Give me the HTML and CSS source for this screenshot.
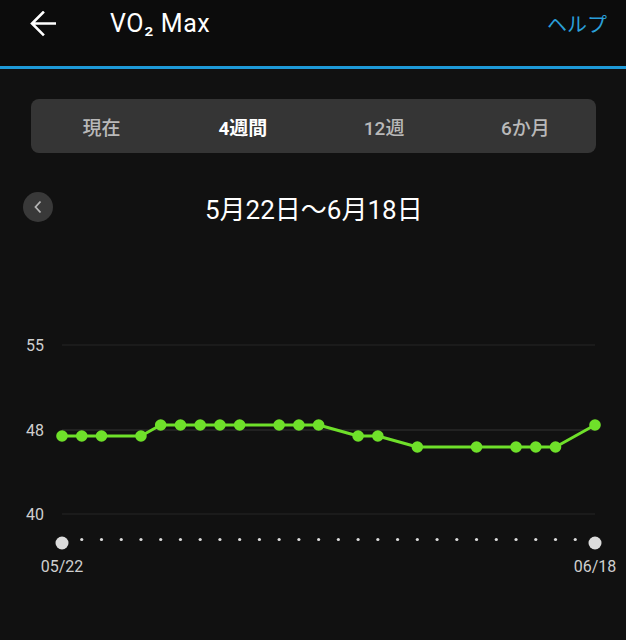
FILE: index.html
```html
<!DOCTYPE html>
<html lang="ja">
<head>
    <meta charset="UTF-8">
    <meta name="viewport" content="width=device-width, initial-scale=1.0">
    <title>VO2 Max</title>
    <link rel="stylesheet" href="styles.css">
</head>
<body>
    <header class="appbar">
        <div class="appbar-row">
            <button class="back-btn" aria-label="戻る">
                <svg width="26" height="26" viewBox="0 0 26 26">
                    <path d="M25 12.5H3 M13 1.5 L2 12.5 L13 23.5" fill="none" stroke="#fff" stroke-width="2.6" stroke-linecap="square"/>
                </svg>
            </button>
            <h1 class="title">VO₂ Max</h1>
            <a class="help" href="#">ヘルプ</a>
        </div>
    </header>

    <main class="content">
        <nav class="tabs">
            <span class="tab">現在</span>
            <span class="tab active">4週間</span>
            <span class="tab">12週</span>
            <span class="tab">6か月</span>
        </nav>

        <div class="range">
            <button class="prev-btn" aria-label="前へ">
                <svg width="10" height="14" viewBox="0 0 10 14">
                    <path d="M7.5 1.5 L2.5 7 L7.5 12.5" fill="none" stroke="#b5b5b5" stroke-width="1.8"/>
                </svg>
            </button>
            <span class="range-text">5月22日〜6月18日</span>
        </div>
    </main>

    <svg class="chart" viewBox="0 223 626 417" width="626" height="417" id="chart">
        <!-- grid -->
        <line x1="62" x2="595" y1="346" y2="346" class="grid"/>
        <line x1="62" x2="595" y1="431" y2="431" class="grid mid"/>
        <line x1="62" x2="595" y1="515" y2="515" class="grid"/>
        <text x="26" y="351.5" class="axis">55</text>
        <text x="26" y="436.5" class="axis">48</text>
        <text x="26" y="521" class="axis">40</text>
        <g id="days"></g>
        <g id="series"></g>
        <text x="62" y="573" class="axis" text-anchor="middle">05/22</text>
        <text x="595" y="573" class="axis" text-anchor="middle">06/18</text>
    </svg>

    <script>
        // day index -> y pixel
        const points = [
            [0, 437], [1, 437], [2, 437], [4, 437],
            [5, 426], [6, 426], [7, 426], [8, 426], [9, 426],
            [11, 426], [12, 426], [13, 426],
            [15, 437], [16, 437],
            [18, 448], [21, 448], [23, 448], [24, 448], [25, 448],
            [27, 426]
        ];
        const NS = 'http://www.w3.org/2000/svg';
        const step = (595 - 62) / 27;
        const dayX = i => 62 + i * step;

        const days = document.getElementById('days');
        for (let i = 0; i <= 27; i++) {
            const c = document.createElementNS(NS, 'circle');
            const edge = i === 0 || i === 27;
            c.setAttribute('cx', dayX(i));
            c.setAttribute('cy', edge ? 544 : 540.5);
            c.setAttribute('r', edge ? 6.5 : 1.6);
            c.setAttribute('class', 'tick');
            days.appendChild(c);
        }

        const series = document.getElementById('series');
        const line = document.createElementNS(NS, 'polyline');
        line.setAttribute('points', points.map(p => dayX(p[0]) + ',' + p[1]).join(' '));
        line.setAttribute('class', 'trend');
        series.appendChild(line);
        points.forEach(p => {
            const c = document.createElementNS(NS, 'circle');
            c.setAttribute('cx', dayX(p[0]));
            c.setAttribute('cy', p[1]);
            c.setAttribute('r', 5.8);
            c.setAttribute('class', 'dot');
            series.appendChild(c);
        });
    </script>
</body>
</html>
```

FILE: styles.css
```css
/* Base */
body {
    margin: 0;
    background: #111111;
    color: #fff;
    font-family: Roboto, "Noto Sans CJK JP", sans-serif;
    width: 626px;
    height: 640px;
    overflow: hidden;
}

button {
    background: none;
    border: none;
    padding: 0;
    cursor: pointer;
}

/* App bar */
.appbar {
    height: 66px;
    background: #0c0c0c;
    border-bottom: 3px solid #1e9ad8;
}

.appbar-row {
    height: 47px;
    display: flex;
    align-items: center;
    padding: 0 19px 0 30px;
}

.back-btn {
    display: flex;
    width: 26px;
    height: 26px;
}

.title {
    margin: 0 0 0 54px;
    font-size: 25px;
    font-weight: 400;
    letter-spacing: 0.6px;
    flex: 1;
}

.help {
    color: #2a9fd9;
    text-decoration: none;
    font-size: 20px;
}

/* Period tabs */
.content {
    padding: 30px 30px 0 31px;
}

.tabs {
    display: grid;
    grid-template-columns: repeat(4, 1fr);
    height: 54px;
    align-items: center;
    background: #353535;
    border-radius: 8px;
}

.tab {
    text-align: center;
    font-size: 19px;
    font-weight: 500;
    color: #b9b9b9;
}

.tab.active {
    color: #fff;
    font-weight: 700;
}

/* Date range */
.range {
    display: flex;
    align-items: center;
    height: 30px;
    margin: 39px 0 0 -8px;
}

.prev-btn {
    width: 30px;
    height: 30px;
    border-radius: 50%;
    background: #393939;
    display: flex;
    align-items: center;
    justify-content: center;
}

.range-text {
    font-size: 26px;
    margin-left: 152px;
}

/* Chart */
.chart {
    display: block;
}

.grid {
    stroke: #262626;
    stroke-width: 1;
}

.grid.mid {
    stroke: #343434;
}

.axis {
    fill: #cfcfcf;
    font-size: 16px;
    font-family: Roboto, sans-serif;
}

.tick {
    fill: #dcdcdc;
}

.trend {
    fill: none;
    stroke: #6fe02a;
    stroke-width: 3;
    stroke-linejoin: round;
}

.dot {
    fill: #6fe02a;
}
```
